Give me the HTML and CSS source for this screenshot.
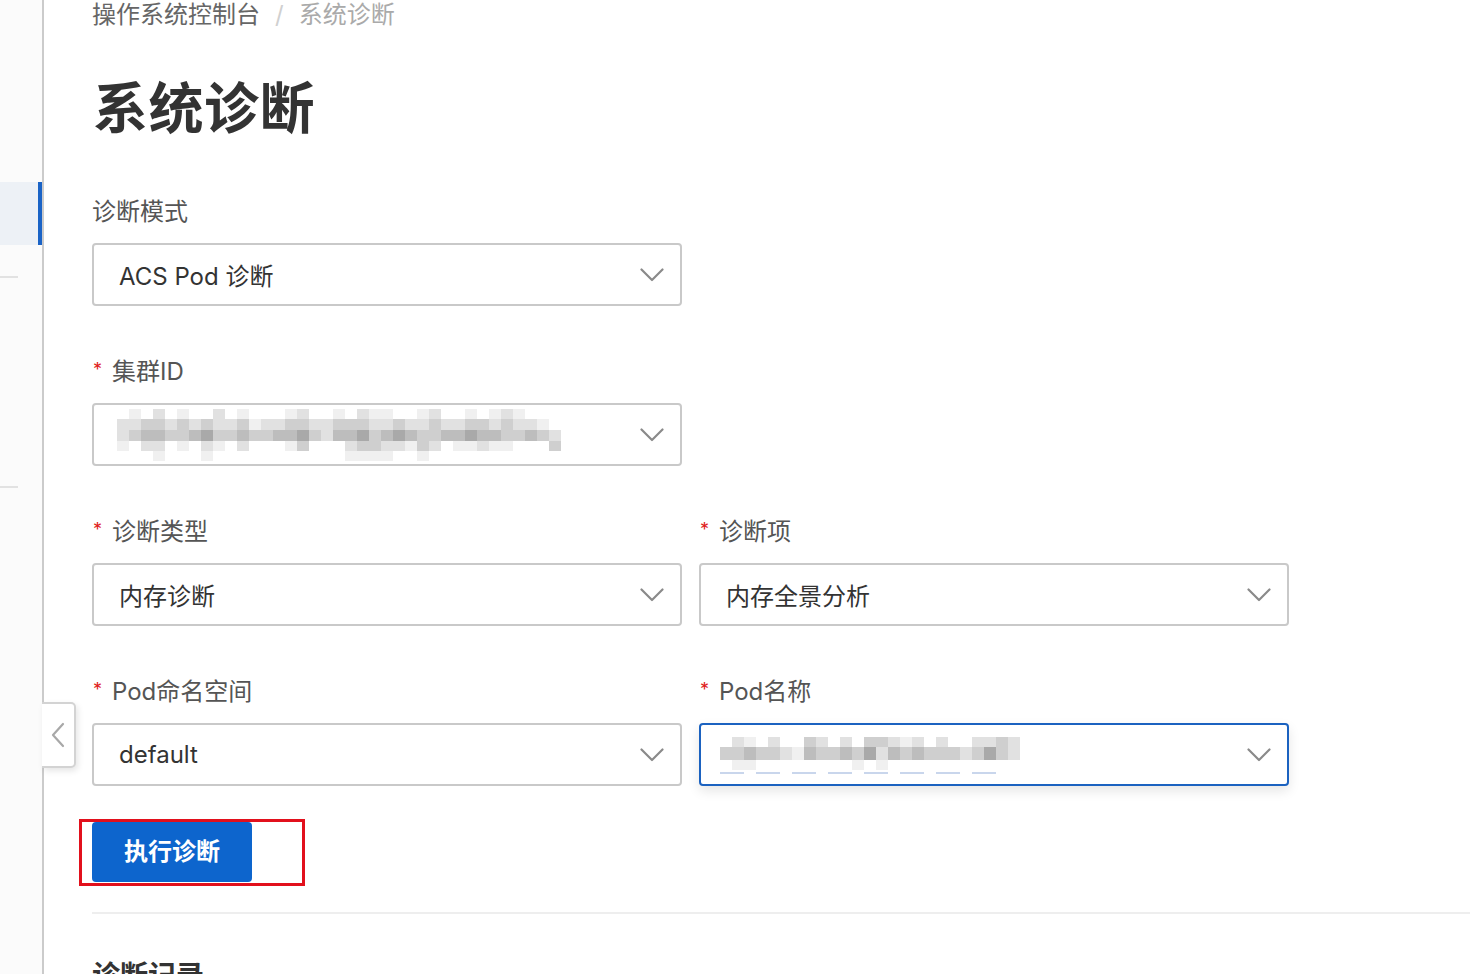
FILE: index.html
```html
<!DOCTYPE html>
<html lang="zh-CN">
<head>
<meta charset="utf-8">
<title>系统诊断</title>
<link rel="stylesheet" href="styles.css">
</head>
<body>
<div class="app">
  <aside class="sidebar">
    <div class="side-item active"></div>
    <div class="side-sep first"></div>
    <div class="side-sep second"></div>
    <button class="collapse" type="button" aria-label="收起">
      <svg width="16" height="26" viewBox="0 0 16 26"><path d="M13 2 L3 13 L13 24" fill="none" stroke="#a8a8a8" stroke-width="2.2" stroke-linecap="round" stroke-linejoin="round"/></svg>
    </button>
  </aside>
  <main class="main">
    <nav class="breadcrumb">
      <span class="crumb">操作系统控制台</span>
      <span class="slash">/</span>
      <span class="crumb current">系统诊断</span>
    </nav>
    <h1 class="title">系统诊断</h1>

    <form class="form">
      <div class="row">
        <div class="field">
          <div class="label">诊断模式</div>
          <div class="select">
            <span class="value">ACS Pod 诊断</span>
            <svg class="arrow" width="24" height="14" viewBox="0 0 24 14"><path d="M1.5 1.5 L12 12 L22.5 1.5" fill="none" stroke="#8a8a8a" stroke-width="2.2" stroke-linecap="round" stroke-linejoin="round"/></svg>
          </div>
        </div>
      </div>

      <div class="row">
        <div class="field">
          <div class="label"><span class="req">*</span>集群ID</div>
          <div class="select">
            <div class="mosaic m1">
              <div class="mr"><i class="s0"></i><i class="s1"></i><i class="s0"></i><i class="s2"></i><i class="s0"></i><i class="s1"></i><i class="s0"></i><i class="s0"></i><i class="s2"></i><i class="s0"></i><i class="s1"></i><i class="s0"></i><i class="s0"></i><i class="s0"></i><i class="s1"></i><i class="s2"></i><i class="s0"></i><i class="s0"></i><i class="s1"></i><i class="s0"></i><i class="s2"></i><i class="s1"></i><i class="s1"></i><i class="s0"></i><i class="s0"></i><i class="s1"></i><i class="s2"></i><i class="s0"></i><i class="s0"></i><i class="s1"></i><i class="s0"></i><i class="s1"></i><i class="s2"></i><i class="s1"></i><i class="s0"></i><i class="s0"></i><i class="s0"></i></div>
              <div class="mr"><i class="s2"></i><i class="s2"></i><i class="s3"></i><i class="s3"></i><i class="s2"></i><i class="s3"></i><i class="s2"></i><i class="s3"></i><i class="s2"></i><i class="s2"></i><i class="s3"></i><i class="s1"></i><i class="s2"></i><i class="s2"></i><i class="s3"></i><i class="s3"></i><i class="s2"></i><i class="s2"></i><i class="s3"></i><i class="s3"></i><i class="s3"></i><i class="s2"></i><i class="s2"></i><i class="s3"></i><i class="s2"></i><i class="s2"></i><i class="s3"></i><i class="s2"></i><i class="s2"></i><i class="s3"></i><i class="s3"></i><i class="s2"></i><i class="s3"></i><i class="s2"></i><i class="s2"></i><i class="s1"></i><i class="s0"></i></div>
              <div class="mr"><i class="s2"></i><i class="s3"></i><i class="s4"></i><i class="s4"></i><i class="s3"></i><i class="s3"></i><i class="s4"></i><i class="s5"></i><i class="s3"></i><i class="s3"></i><i class="s4"></i><i class="s3"></i><i class="s3"></i><i class="s4"></i><i class="s4"></i><i class="s5"></i><i class="s3"></i><i class="s2"></i><i class="s4"></i><i class="s4"></i><i class="s5"></i><i class="s3"></i><i class="s4"></i><i class="s5"></i><i class="s4"></i><i class="s3"></i><i class="s3"></i><i class="s4"></i><i class="s4"></i><i class="s5"></i><i class="s4"></i><i class="s4"></i><i class="s3"></i><i class="s3"></i><i class="s4"></i><i class="s3"></i><i class="s2"></i></div>
              <div class="mr"><i class="s1"></i><i class="s0"></i><i class="s2"></i><i class="s2"></i><i class="s0"></i><i class="s1"></i><i class="s0"></i><i class="s2"></i><i class="s1"></i><i class="s0"></i><i class="s2"></i><i class="s0"></i><i class="s0"></i><i class="s0"></i><i class="s1"></i><i class="s3"></i><i class="s0"></i><i class="s0"></i><i class="s0"></i><i class="s2"></i><i class="s3"></i><i class="s3"></i><i class="s2"></i><i class="s2"></i><i class="s1"></i><i class="s3"></i><i class="s2"></i><i class="s0"></i><i class="s1"></i><i class="s1"></i><i class="s2"></i><i class="s1"></i><i class="s1"></i><i class="s0"></i><i class="s0"></i><i class="s0"></i><i class="s3"></i></div>
              <div class="mr"><i class="s0"></i><i class="s0"></i><i class="s0"></i><i class="s1"></i><i class="s0"></i><i class="s0"></i><i class="s0"></i><i class="s1"></i><i class="s0"></i><i class="s0"></i><i class="s0"></i><i class="s0"></i><i class="s0"></i><i class="s0"></i><i class="s0"></i><i class="s0"></i><i class="s0"></i><i class="s0"></i><i class="s0"></i><i class="s1"></i><i class="s1"></i><i class="s1"></i><i class="s1"></i><i class="s0"></i><i class="s0"></i><i class="s1"></i><i class="s0"></i><i class="s0"></i><i class="s0"></i><i class="s0"></i><i class="s0"></i><i class="s0"></i><i class="s0"></i><i class="s0"></i><i class="s0"></i><i class="s0"></i><i class="s0"></i></div>
            </div>
            <svg class="arrow" width="24" height="14" viewBox="0 0 24 14"><path d="M1.5 1.5 L12 12 L22.5 1.5" fill="none" stroke="#8a8a8a" stroke-width="2.2" stroke-linecap="round" stroke-linejoin="round"/></svg>
          </div>
        </div>
      </div>

      <div class="row two">
        <div class="field">
          <div class="label"><span class="req">*</span>诊断类型</div>
          <div class="select">
            <span class="value">内存诊断</span>
            <svg class="arrow" width="24" height="14" viewBox="0 0 24 14"><path d="M1.5 1.5 L12 12 L22.5 1.5" fill="none" stroke="#8a8a8a" stroke-width="2.2" stroke-linecap="round" stroke-linejoin="round"/></svg>
          </div>
        </div>
        <div class="field">
          <div class="label"><span class="req">*</span>诊断项</div>
          <div class="select">
            <span class="value">内存全景分析</span>
            <svg class="arrow" width="24" height="14" viewBox="0 0 24 14"><path d="M1.5 1.5 L12 12 L22.5 1.5" fill="none" stroke="#8a8a8a" stroke-width="2.2" stroke-linecap="round" stroke-linejoin="round"/></svg>
          </div>
        </div>
      </div>

      <div class="row two">
        <div class="field">
          <div class="label"><span class="req">*</span>Pod命名空间</div>
          <div class="select">
            <span class="value">default</span>
            <svg class="arrow" width="24" height="14" viewBox="0 0 24 14"><path d="M1.5 1.5 L12 12 L22.5 1.5" fill="none" stroke="#8a8a8a" stroke-width="2.2" stroke-linecap="round" stroke-linejoin="round"/></svg>
          </div>
        </div>
        <div class="field">
          <div class="label"><span class="req">*</span>Pod名称</div>
          <div class="select focused">
            <div class="mosaic m2">
              <div class="mr"><i class="s0"></i><i class="s2"></i><i class="s1"></i><i class="s0"></i><i class="s2"></i><i class="s0"></i><i class="s0"></i><i class="s3"></i><i class="s2"></i><i class="s0"></i><i class="s2"></i><i class="s0"></i><i class="s3"></i><i class="s3"></i><i class="s2"></i><i class="s1"></i><i class="s2"></i><i class="s0"></i><i class="s2"></i><i class="s0"></i><i class="s0"></i><i class="s2"></i><i class="s2"></i><i class="s3"></i><i class="s2"></i></div>
              <div class="mr"><i class="s3"></i><i class="s3"></i><i class="s4"></i><i class="s3"></i><i class="s3"></i><i class="s2"></i><i class="s1"></i><i class="s4"></i><i class="s3"></i><i class="s3"></i><i class="s4"></i><i class="s3"></i><i class="s5"></i><i class="s2"></i><i class="s4"></i><i class="s3"></i><i class="s4"></i><i class="s3"></i><i class="s3"></i><i class="s3"></i><i class="s2"></i><i class="s3"></i><i class="s5"></i><i class="s3"></i><i class="s2"></i></div>
              <div class="mr"><i class="s0"></i><i class="s1"></i><i class="s1"></i><i class="s0"></i><i class="s0"></i><i class="s0"></i><i class="s0"></i><i class="s0"></i><i class="s0"></i><i class="s0"></i><i class="s0"></i><i class="s1"></i><i class="s0"></i><i class="s1"></i><i class="s0"></i><i class="s0"></i><i class="s0"></i><i class="s0"></i><i class="s0"></i><i class="s0"></i><i class="s0"></i><i class="s0"></i><i class="s0"></i><i class="s0"></i><i class="s0"></i></div>
              <div class="dashes"><b></b><b></b><b></b><b></b><b></b><b></b><b></b><b></b></div>
            </div>
            <svg class="arrow" width="24" height="14" viewBox="0 0 24 14"><path d="M1.5 1.5 L12 12 L22.5 1.5" fill="none" stroke="#8a8a8a" stroke-width="2.2" stroke-linecap="round" stroke-linejoin="round"/></svg>
          </div>
        </div>
      </div>

      <div class="actions">
        <div class="btn-wrap">
          <button class="btn-primary" type="button">执行诊断</button>
          <span class="highlight"></span>
        </div>
      </div>
    </form>

    <div class="divider"></div>
    <h2 class="section-title">诊断记录</h2>
  </main>
</div>
</body>
</html>
```

FILE: styles.css
```css
* { box-sizing: border-box; }
html, body { margin: 0; padding: 0; }
body {
  background: #ffffff;
  font-family: Inter, "Noto Sans CJK SC", sans-serif;
  color: #333;
  overflow: hidden;
  height: 974px;
}
.app {
  display: flex;
  min-height: 974px;
}
.sidebar {
  position: relative;
  width: 44px;
  flex: 0 0 44px;
  background: #fbfbfb;
  border-right: 2px solid #cbcbcb;
  padding-top: 182px;
}
.side-item.active {
  height: 63px;
  background: #edf1f6;
  border-right: 4px solid #1a63c6;
}
.side-sep {
  width: 18px;
  height: 2px;
  background: #e2e2e2;
}
.side-sep.first { margin-top: 31px; }
.side-sep.second { margin-top: 208px; }
.collapse {
  position: absolute;
  left: 42px;
  top: 702px;
  width: 34px;
  height: 66px;
  padding: 0;
  background: #fff;
  border: 2px solid #d3d3d3;
  border-left: none;
  border-radius: 0 5px 5px 0;
  box-shadow: 2px 3px 6px rgba(0,0,0,0.10);
  display: flex;
  align-items: center;
  justify-content: center;
}
.main {
  flex: 1;
  padding-left: 48px;
  min-width: 0;
}
.breadcrumb {
  height: 30px;
  line-height: 30px;
  font-size: 24px;
  display: flex;
  white-space: nowrap;
}
.crumb { color: #666; }
.crumb.current { color: #aaa; }
.slash { color: #d0d0d0; margin: 0 15px 0 15px; }
.title {
  margin: 46px 0 0 1px;
  font-size: 55px;
  line-height: 64px;
  height: 64px;
  font-weight: 700;
  color: #333;
  letter-spacing: 0.5px;
}
.form { margin-top: 56px; }
.row {
  display: flex;
  gap: 17px;
  margin-bottom: 50px;
}
.field { width: 590px; }
.label {
  height: 32px;
  line-height: 32px;
  font-size: 24px;
  color: #555;
  margin-bottom: 15px;
  display: flex;
  align-items: center;
  white-space: nowrap;
}
.req {
  color: #e0201a;
  font-size: 18px;
  margin-right: 10px;
  margin-left: 1px;
  position: relative;
  top: -2px;
}
.select {
  position: relative;
  height: 63px;
  border: 2px solid #c9c9c9;
  border-radius: 4px;
  background: #fff;
  display: flex;
  align-items: center;
  padding: 0 16px 0 25px;
}
.select.focused {
  border-color: #1b62c0;
  box-shadow: 0 5px 12px rgba(0,0,0,0.10);
}
.value {
  flex: 1;
  font-size: 24px;
  color: #333;
  white-space: nowrap;
}
.arrow { margin-left: auto; flex: 0 0 auto; }
.mosaic { display: flex; flex-direction: column; }
.m1 { margin-left: -2px; }
.m2 { margin-left: -6px; margin-top: 2px; }
.mr { display: flex; height: 10px; }
.mr i { display: block; width: 12px; height: 10px; }
.m1 .mr:nth-child(2), .m1 .mr:nth-child(3) { height: 11px; }
.m1 .mr:nth-child(2) i, .m1 .mr:nth-child(3) i { height: 11px; }
.m2 .mr:nth-child(2) { height: 13px; }
.m2 .mr:nth-child(2) i { height: 13px; }
.s0 { background: transparent; }
.s1 { background: #f0f0f0; }
.s2 { background: #e1e1e1; }
.s3 { background: #cfcfcf; }
.s4 { background: #bdbdbd; }
.s5 { background: #a9a9a9; }
.dashes { display: flex; gap: 12px; margin-top: 2px; height: 2px; }
.dashes b { display: block; width: 24px; height: 2px; background: #c9d6ec; }
.actions { margin-top: -14px; }
.btn-wrap {
  position: relative;
  display: inline-block;
}
.btn-primary {
  width: 160px;
  height: 60px;
  border: none;
  border-radius: 4px;
  background: #0d65cd;
  color: #fff;
  font-family: inherit;
  font-size: 24px;
  font-weight: 700;
  padding: 0 0 5px 0;
  display: block;
}
.highlight {
  position: absolute;
  left: -13px;
  top: -3px;
  width: 226px;
  height: 67px;
  border: 3px solid #e2101c;
  pointer-events: none;
}
.divider {
  margin-top: 30px;
  height: 2px;
  background: #eeeeee;
}
.section-title {
  margin: 42px 0 0 0;
  font-size: 28px;
  line-height: 40px;
  font-weight: 700;
  color: #333;
}
```
